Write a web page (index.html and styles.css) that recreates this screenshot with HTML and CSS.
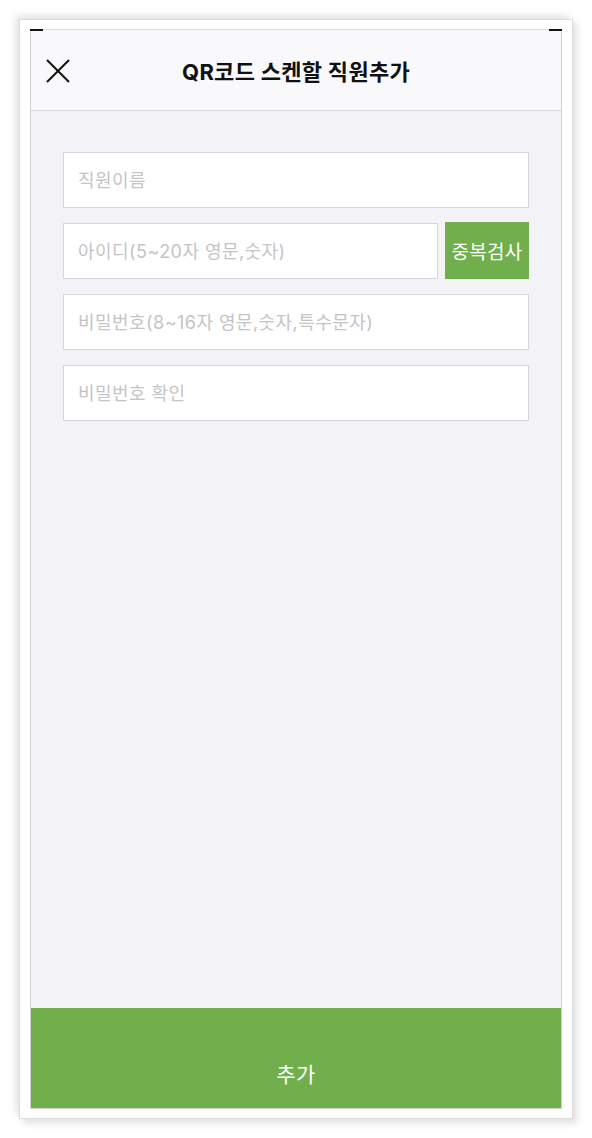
FILE: index.html
```html
<!DOCTYPE html>
<html lang="ko">
<head>
<meta charset="utf-8">
<title>QR코드 스켄할 직원추가</title>
<link rel="stylesheet" href="styles.css">
</head>
<body>
<div class="frame">
  <div class="screen">
    <header class="topbar">
      <button class="close" aria-label="닫기">
        <svg width="24" height="24" viewBox="0 0 24 24"><path d="M1 1 L23 23 M23 1 L1 23" stroke="#111" stroke-width="2" fill="none"/></svg>
      </button>
      <h1 class="title">QR코드 스켄할 직원추가</h1>
      <span class="spacer"></span>
    </header>
    <main class="content">
      <input class="field" type="text" placeholder="직원이름">
      <div class="row">
        <input class="field grow" type="text" placeholder="아이디(5~20자 영문,숫자)">
        <button class="check">중복검사</button>
      </div>
      <input class="field" type="password" placeholder="비밀번호(8~16자 영문,숫자,특수문자)">
      <input class="field" type="password" placeholder="비밀번호 확인">
    </main>
    <button class="submit">추가</button>
  </div>
</div>
</body>
</html>
```

FILE: styles.css
```css
* { box-sizing: border-box; }
html, body { margin: 0; padding: 0; background: #fff; }
body {
  font-family: Inter, "Noto Sans CJK KR", sans-serif;
  width: 592px;
  height: 1138px;
  overflow: hidden;
}
.frame {
  margin: 19px 0 0 19px;
  width: 554px;
  height: 1100px;
  border: 1px solid #dcdcdc;
  background: #fff;
  padding: 9px 10px 10px 10px;
  box-shadow: -4px -4px 7px rgba(0,0,0,0.10), 4px 4px 7px rgba(0,0,0,0.12);
}
.screen {
  position: relative;
  width: 532px;
  height: 1080px;
  border: 1px solid #d2d2d2;
  border-top-color: #dcdcdc;
  background: #f2f2f7;
  display: flex;
  flex-direction: column;
}
.screen::before, .screen::after {
  content: "";
  position: absolute;
  top: -1px;
  width: 13px;
  height: 2px;
  background: #111;
}
.screen::before { left: -1px; }
.screen::after { right: -1px; }
.topbar {
  height: 81px;
  flex: none;
  background: #f9f9fb;
  border-bottom: 1px solid #d8d8d8;
  display: flex;
  align-items: center;
  padding: 0 15px;
}
.close {
  width: 24px;
  height: 24px;
  padding: 0;
  border: 0;
  background: none;
  display: flex;
  margin-top: 1px;
}
.spacer { width: 24px; }
.title {
  flex: 1;
  margin: 0;
  text-align: center;
  font-size: 22px;
  font-weight: 700;
  color: #111;
  letter-spacing: 0.3px;
}
.content {
  flex: 1;
  padding: 41px 32px 0 32px;
  display: flex;
  flex-direction: column;
  gap: 15px;
}
.row {
  display: flex;
  gap: 7px;
}
.field {
  height: 56px;
  width: 100%;
  border: 1px solid #d6d6d8;
  background: #fff;
  padding: 0 14px;
  font-family: Inter, "Noto Sans CJK KR", sans-serif;
  font-size: 18px;
  letter-spacing: 0.45px;
  color: #333;
  outline: none;
  border-radius: 0;
}
.field::placeholder { color: #c4c4c6; }
.field.grow { flex: 1; width: auto; height: 56px; }
.check {
  width: 84px;
  height: 57px;
  margin-top: -1px;
  border: 0;
  background: #70af4c;
  color: #fff;
  font-family: Inter, "Noto Sans CJK KR", sans-serif;
  font-size: 19px;
  letter-spacing: 0.3px;
  padding: 0;
}
.submit {
  flex: none;
  height: 100px;
  border: 0;
  background: #70af4c;
  color: #fff;
  font-family: Inter, "Noto Sans CJK KR", sans-serif;
  font-size: 21px;
  letter-spacing: 0.5px;
  padding: 30px 0 0 0;
  border-radius: 0;
}
```
